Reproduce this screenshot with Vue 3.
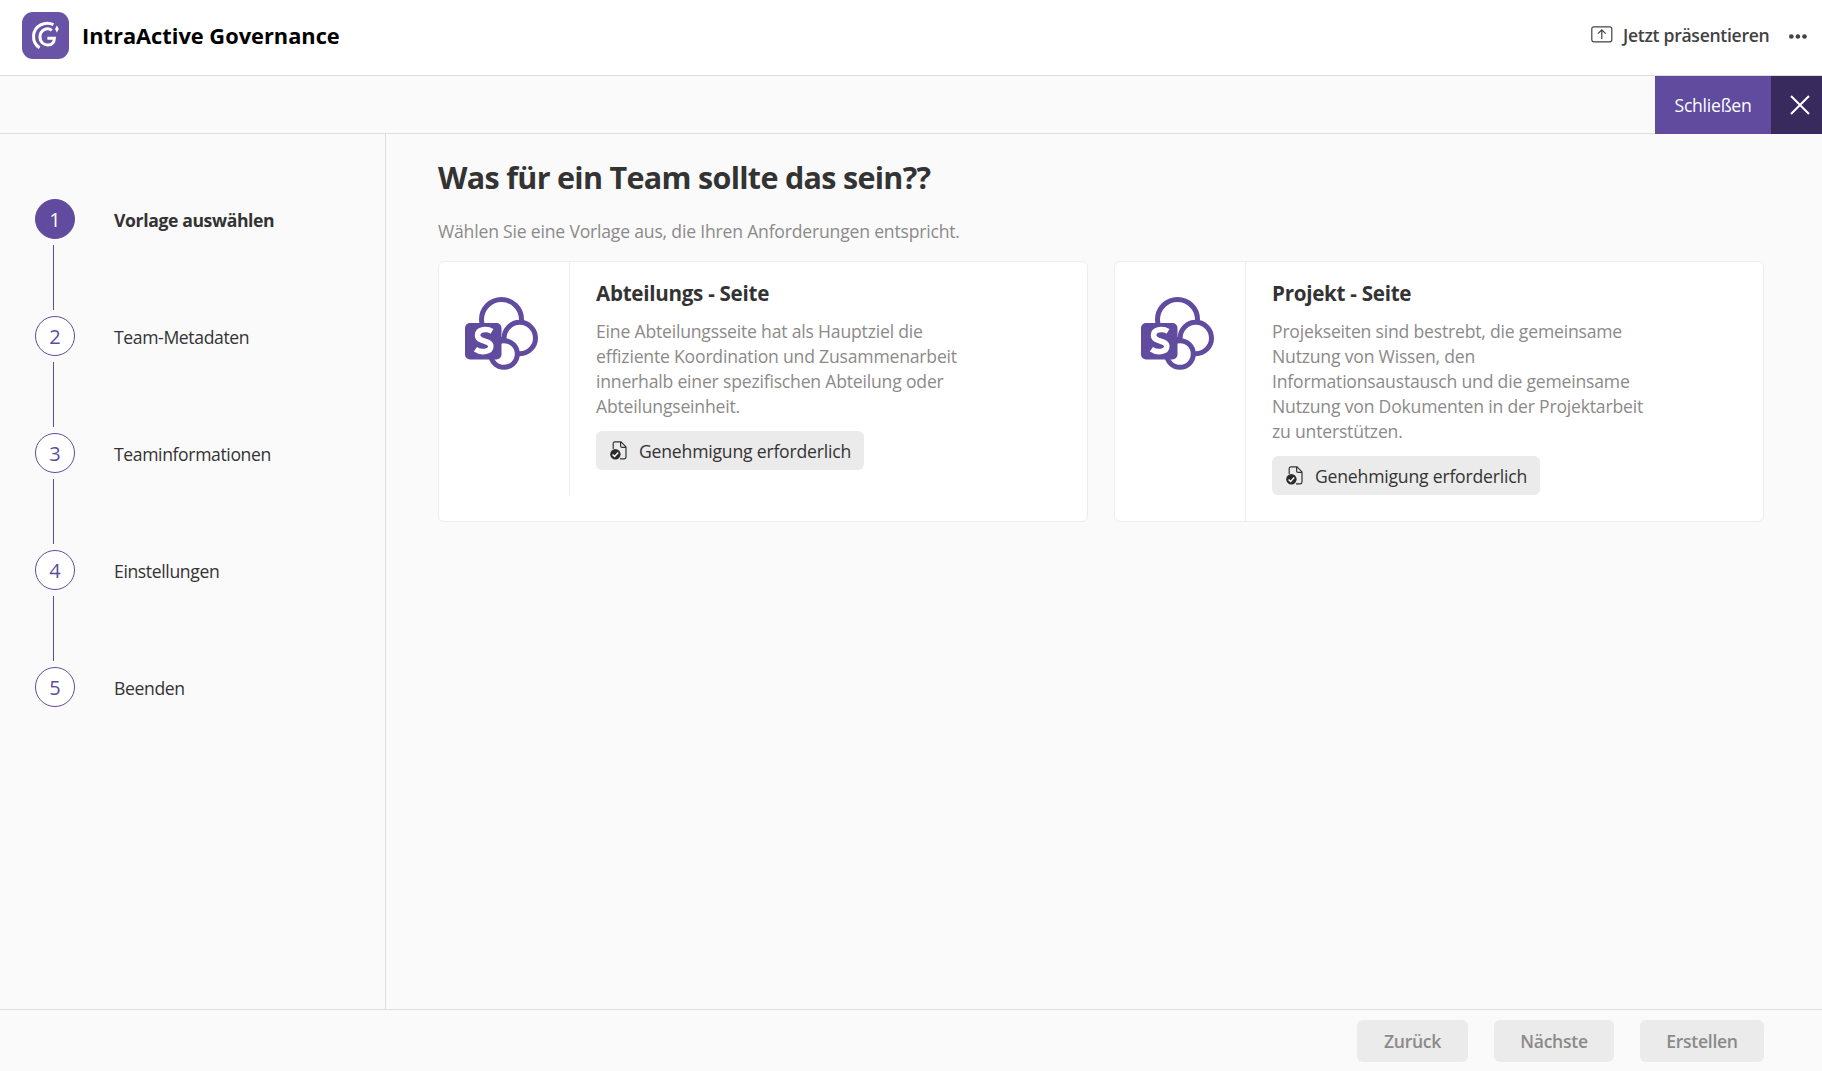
<template>
  <div class="app">
    <header class="app-header">
      <svg class="app-logo" width="47" height="47" viewBox="0 0 47 47">
        <path d="M23.5 0C42 0 47 5 47 23.5S42 47 23.5 47 0 42 0 23.5 5 0 23.5 0Z" fill="#6953a7" />
        <rect width="47" height="47" rx="11" fill="#6953a7" />
        <path d="M31.4 12.7C23 8.6 12.4 13.8 11.6 23.5C11.2 29 13.6 33.2 17.6 35.8" fill="none" stroke="#fff" stroke-width="3" />
        <path d="M29.8 18.4C25.5 14.8 18 18 18 24.8C18 30.4 22 33 25.8 33C30 33 32.2 30.2 32.4 26.2H25.4" fill="none" stroke="#fff" stroke-width="3" />
        <path d="M34.9 13.6l1.9 3.4-1.9 3.4-1.9-3.4z" fill="#fff" />
      </svg>
      <h1 class="app-title">IntraActive Governance</h1>
      <div class="present">
        <svg width="22" height="17" viewBox="0 0 22 17" fill="none" stroke="#424242" stroke-width="1.2">
          <rect x="0.8" y="0.8" width="20" height="15" rx="2" />
          <path d="M10.8 13V4M7 7.6l3.8-3.8 3.8 3.8" />
        </svg>
        <span class="present-label">Jetzt präsentieren</span>
      </div>
      <svg class="more" width="18" height="5" viewBox="0 0 18 5" fill="#424242">
        <circle cx="2.3" cy="2.5" r="2.3" />
        <circle cx="8.9" cy="2.5" r="2.3" />
        <circle cx="15.5" cy="2.5" r="2.3" />
      </svg>
    </header>

    <div class="toolbar">
      <button class="close-btn"><span>Schließen</span></button>
      <button class="close-icon">
        <svg width="20" height="20" viewBox="0 0 20 20" stroke="#fff" stroke-width="2">
          <path d="M1 1l18 18M19 1L1 19" />
        </svg>
      </button>
    </div>

    <div class="body">
      <aside class="sidebar">
        <div v-for="(step, index) in steps" :key="step" class="step" :class="{ active: index === current }">
          <div class="step-track">
            <div class="step-number">{{ index + 1 }}</div>
            <div v-if="index < steps.length - 1" class="step-line"></div>
          </div>
          <div class="step-label"><span>{{ step }}</span></div>
        </div>
      </aside>

      <main class="content">
        <h2 class="heading"><span>Was für ein Team sollte das sein??</span></h2>
        <p class="subtitle"><span>Wählen Sie eine Vorlage aus, die Ihren Anforderungen entspricht.</span></p>
        <div class="cards">
          <div v-for="template in templates" :key="template.title" class="card">
            <div class="card-icon">
              <svg width="73" height="73" viewBox="0 0 73 73">
                <g fill="#fff" stroke="#604b9e" stroke-width="5">
                  <circle cx="36.5" cy="22.5" r="20" />
                  <circle cx="54.8" cy="41" r="15.7" />
                  <circle cx="39" cy="57" r="13.3" />
                </g>
                <rect y="26" width="36.5" height="36.5" rx="5" fill="#604b9e" />
                <path d="M27 34.3C22.5 31.6 12.6 31.6 12.6 38.2C12.6 45.6 25.8 42.6 25.8 49.3C25.8 55.6 15.5 55.8 10.4 52.2" fill="none" stroke="#fff" stroke-width="5.6" />
              </svg>
            </div>
            <div class="card-body">
              <h3 class="card-title"><span>{{ template.title }}</span></h3>
              <p class="card-text">
                <span v-for="line in template.lines" :key="line">{{ line }}</span>
              </p>
              <div class="badge">
                <svg width="18" height="19" viewBox="0 0 18 19">
                  <path d="M3.2 8V2.6C3.2 1.5 3.9.9 4.9.9H11l5 5v10.2c0 1.1-.7 1.7-1.7 1.7H10M10.6 1v3.7c0 1 .6 1.6 1.6 1.6H16" fill="none" stroke="#333" stroke-width="1.2" />
                  <circle cx="5.4" cy="13.3" r="5.2" fill="#2b2b2b" />
                  <path d="M2.6 13.4l2 2 3.6-3.8" fill="none" stroke="#fff" stroke-width="1.4" />
                </svg>
                <span class="badge-label">Genehmigung erforderlich</span>
              </div>
            </div>
          </div>
        </div>
      </main>
    </div>

    <footer class="footer">
      <button class="footer-btn back" disabled><span>Zurück</span></button>
      <button class="footer-btn next" disabled><span>Nächste</span></button>
      <button class="footer-btn create" disabled><span>Erstellen</span></button>
    </footer>
  </div>
</template>

<script setup>
import { ref } from 'vue'

const current = ref(0)

const steps = ['Vorlage auswählen', 'Team-Metadaten', 'Teaminformationen', 'Einstellungen', 'Beenden']

const templates = [
  {
    title: 'Abteilungs - Seite',
    lines: [
      'Eine Abteilungsseite hat als Hauptziel die',
      'effiziente Koordination und Zusammenarbeit',
      'innerhalb einer spezifischen Abteilung oder',
      'Abteilungseinheit.'
    ]
  },
  {
    title: 'Projekt - Seite',
    lines: [
      'Projekseiten sind bestrebt, die gemeinsame',
      'Nutzung von Wissen, den',
      'Informationsaustausch und die gemeinsame',
      'Nutzung von Dokumenten in der Projektarbeit',
      'zu unterstützen.'
    ]
  }
]
</script>

<style>
body {
  margin: 0;
}
</style>

<style scoped>
.app {
  display: flex;
  flex-direction: column;
  height: 100vh;
  overflow: hidden;
  background-color: #fafafa;
  color: #333;
  font-family: 'Segoe UI', 'Open Sans', 'Noto Sans', sans-serif;
  font-size: 17.6px;
  white-space: nowrap;
}

h1,
h2,
h3,
p {
  margin: 0;
}

button {
  border: 0;
  padding: 0;
  font: inherit;
}

.app-header {
  display: flex;
  align-items: center;
  box-sizing: border-box;
  flex: none;
  height: 76px;
  padding: 0 15px 4px 22px;
  border-bottom: 1px solid #dedede;
  background-color: #fff;
}

.app-title {
  margin-left: 13px;
  color: #000;
  font-size: 21.8px;
  line-height: 30px;
  font-weight: 700;
  letter-spacing: 0;
}

.present {
  display: flex;
  align-items: center;
  gap: 10px;
  margin: 0 0 2px auto;
  color: #424242;
  font-weight: 600;
}

.present-label {
  width: 147px;
  letter-spacing: -0.3px;
}

.more {
  margin: 1px 0 0 19px;
}

.toolbar {
  display: flex;
  justify-content: flex-end;
  box-sizing: border-box;
  flex: none;
  height: 58px;
  border-bottom: 1px solid #dedede;
}

.close-btn,
.close-icon {
  height: 58px;
  background-color: #604b9e;
  color: #fff;
}

.close-btn {
  width: 116px;
  letter-spacing: -0.25px;
}

.close-icon {
  display: flex;
  align-items: center;
  justify-content: center;
  width: 51px;
  padding-left: 6px;
  background-color: #392a5d;
}

.body {
  display: flex;
  flex: 1;
  min-height: 0;
}

.sidebar {
  box-sizing: border-box;
  width: 386px;
  padding: 65px 0 0 35px;
  border-right: 1px solid #dedede;
}

.step {
  display: flex;
  height: 117px;
}

.step-track {
  width: 40px;
}

.step-number {
  display: flex;
  align-items: center;
  justify-content: center;
  box-sizing: border-box;
  width: 40px;
  height: 40px;
  border: 1px solid #604b9e;
  border-radius: 50%;
  background-color: #fff;
  color: #604b9e;
  font-size: 20px;
}

.step-line {
  width: 1px;
  height: 65px;
  margin: 6px 0 0 18px;
  background-color: #604b9e;
}

.step-label {
  margin-left: 39px;
  line-height: 43px;
  letter-spacing: -0.38px;
}

.active .step-number {
  background-color: #604b9e;
  color: #fff;
}

.active .step-label {
  font-weight: 700;
}

.content {
  flex: 1;
  padding: 21px 58px 0 52px;
}

.heading {
  font-size: 30.5px;
  line-height: 44px;
  letter-spacing: -0.7px;
}

.subtitle {
  margin-top: 19px;
  color: #8c8a89;
  line-height: 26px;
  letter-spacing: -0.2px;
}

.cards {
  display: grid;
  grid-template-columns: 1fr 1fr;
  gap: 26px;
  margin-top: 17px;
}

.card {
  display: flex;
  align-items: flex-start;
  box-sizing: border-box;
  height: 261px;
  border: 1px solid #ededed;
  border-radius: 6px;
  background-color: #fff;
}

.card-icon {
  padding: 35px 31px 0 26px;
}

.card-body {
  box-sizing: border-box;
  padding: 16px 0 26px 26px;
  border-left: 1px solid #ededed;
}

.card-title {
  font-size: 20.6px;
  line-height: 30px;
  letter-spacing: -0.28px;
}

.card-text {
  display: flex;
  flex-direction: column;
  align-items: flex-start;
  margin: 11px 0 12px;
  color: #8c8a89;
  line-height: 25px;
  letter-spacing: -0.2px;
}

.badge {
  display: flex;
  align-items: center;
  gap: 11px;
  box-sizing: border-box;
  width: 268px;
  height: 39px;
  padding-left: 14px;
  border-radius: 6px;
  background-color: #ebebeb;
  letter-spacing: -0.2px;
}

.footer {
  display: flex;
  justify-content: flex-end;
  gap: 26px;
  box-sizing: border-box;
  flex: none;
  height: 62px;
  padding: 10px 58px 0 0;
  border-top: 1px solid #dedede;
}

.footer-btn {
  height: 42px;
  border-radius: 6px;
  background-color: #ebebeb;
  color: #8c8a89;
  font-weight: 600;
  letter-spacing: -0.3px;
}

.back {
  width: 111px;
}

.next {
  width: 120px;
}

.create {
  width: 124px;
}
</style>
